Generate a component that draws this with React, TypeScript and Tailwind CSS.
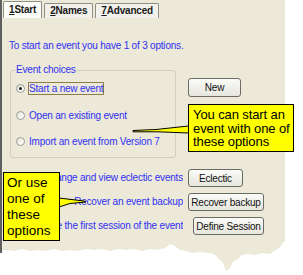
import React from 'react';

const BLUE = 'text-[#3030f4]';

function Tab({ digit, label, active }: { digit: string; label: string; active?: boolean }) {
  return (
    <div
      className={
        active
          ? 'h-[17px] px-[5px] flex items-center bg-[#fbfbf8] border border-[#8f8f88] border-b-0 rounded-t-[2px]'
          : 'h-[15px] px-[5px] flex items-center bg-[#f1f0ea] border border-[#8f8f88] border-b-0 rounded-t-[2px]'
      }
    >
      <span className="text-[10px] leading-[12px] font-bold tracking-[-0.2px] text-[#1a1a1a]">
        <span className="underline">{digit}</span>
        {label}
      </span>
    </div>
  );
}

function XpButton({ label, className = '' }: { label: string; className?: string }) {
  return (
    <div
      className={
        'h-[18px] flex items-center justify-center rounded-[3px] border border-[#6c6c66] bg-gradient-to-b from-[#fbfbf8] to-[#e6e5dd] text-[10px] tracking-[-0.2px] text-[#111] ' +
        className
      }
    >
      {label}
    </div>
  );
}

function Radio({ checked }: { checked?: boolean }) {
  return (
    <div className="w-[9px] h-[9px] rounded-full border border-[#9c9c94] bg-gradient-to-br from-[#e2e2da] to-white flex items-center justify-center shrink-0">
      {checked && <div className="w-[3px] h-[3px] rounded-full bg-[#1d1d1d]" />}
    </div>
  );
}

function ActionRow({ text, button, btnClass }: { text: string; button: string; btnClass: string }) {
  return (
    <div className="flex items-center">
      <div className={`w-[181px] text-right text-[10px] leading-[12px] tracking-[-0.2px] whitespace-nowrap overflow-hidden ${BLUE}`}>
        {text}
      </div>
      <XpButton label={button} className={btnClass} />
    </div>
  );
}

export default function App() {
  return (
    <div className="relative w-[303px] h-[275px] bg-white overflow-hidden font-['Liberation_Sans',Arial,sans-serif]">
      <div className="w-[285px]">
        {/* Dialog page */}
        <div className="h-[242px] bg-[#ECE9D8] border-l-2 border-[#5f5f5f]">
          {/* Tabs */}
          <div className="flex items-end gap-[2px] pl-[1px] pt-[1px] h-[18px]">
            <Tab digit="1" label="Start" active />
            <Tab digit="2" label="Names" />
            <Tab digit="7" label="Advanced" />
          </div>

          <p className={`mt-[22px] pl-[7px] text-[10px] leading-[12px] tracking-[-0.2px] ${BLUE}`}>
            To start an event you have 1 of 3 options.
          </p>

          {/* Event choices */}
          <div className="mt-[12px] flex items-start">
            <fieldset className="ml-[8px] w-[166px] h-[94px] border border-[#cfcfc0] rounded-[3px]">
              <legend className={`ml-[5px] text-[10px] leading-[12px] tracking-[-0.2px] ${BLUE}`}>Event choices</legend>
              <div className="flex flex-col">
                <div className="mt-[6px] ml-[5px] flex items-center gap-[3px] h-[13px]">
                  <Radio checked />
                  <span className={`border border-[#8d7d4c] text-[10px] leading-[11px] tracking-[-0.2px] ${BLUE}`}>
                    Start a new event
                  </span>
                </div>
                <div className="mt-[14px] ml-[5px] flex items-center gap-[3px] h-[13px]">
                  <Radio />
                  <span className={`border border-transparent text-[10px] leading-[11px] tracking-[-0.2px] ${BLUE}`}>
                    Open an existing event
                  </span>
                </div>
                <div className="mt-[13px] ml-[5px] flex items-center gap-[3px] h-[13px]">
                  <Radio />
                  <span className={`border border-transparent text-[10px] leading-[11px] tracking-[-0.2px] ${BLUE}`}>
                    Import an event from Version 7
                  </span>
                </div>
              </div>
            </fieldset>
            <XpButton label="New" className="ml-[12px] mt-[14px] w-[53px] h-[19px]" />
          </div>

          {/* Other actions */}
          <div className="mt-[11px] flex flex-col gap-[6px]">
            <ActionRow text="Change and view eclectic events" button="Eclectic" btnClass="ml-[5px] w-[55px]" />
            <ActionRow text="Recover an event backup" button="Recover backup" btnClass="ml-[5px] w-[76px]" />
            <ActionRow text="Define the first session of the event" button="Define Session" btnClass="ml-[10px] w-[71px]" />
          </div>
        </div>

        {/* torn paper edge */}
        <svg width="285" height="33" viewBox="0 0 285 33" className="block">
          <polygon
            fill="#ECE9D8"
            points="0,0 285,0 283,0 281,4 278,7 274,9 270,12 262,11 255,13 248,12 242,13 238,17 233,20 229,27 226,29 223,21 219,17 214,12 208,11 200,10 192,11 186,9 180,8 175,4 170,2 165,6 158,8 150,7 142,9 134,7 126,8 118,7 110,9 102,7 94,8 86,7 78,9 70,8 62,9 54,7 46,9 38,8 30,9 22,7 14,9 8,8 2,9 0,11"
          />
          <rect x="0" y="0" width="2" height="11" fill="#5f5f5f" />
        </svg>
      </div>

      {/* callout pointers */}
      <svg width="303" height="275" className="absolute left-0 top-0 pointer-events-none">
        <polygon
          points="133,130.5 156,129.5 188.5,126 188.5,133 158,131.8 133,131.8"
          fill="#ffff00"
          stroke="#000"
          strokeWidth="1"
        />
        <polygon points="59,198 84,201 86,202 70,203.5 59,207" fill="#ffff00" stroke="#000" strokeWidth="1" />
      </svg>

      {/* callout 1 */}
      <div className="absolute left-[188px] top-[104px] w-[106px] h-[48px] bg-[#ffff00] border border-black pl-[4px] pt-[3px] text-[13px] leading-[13.5px] tracking-[-0.1px] whitespace-nowrap text-black">
        <div>You can start an</div>
        <div>event with one of</div>
        <div>these options</div>
      </div>

      {/* callout 2 */}
      <div className="absolute left-[3px] top-[172px] w-[57px] h-[69px] bg-[#ffff00] border border-black pl-[3px] pt-[2px] text-[13.5px] leading-[16px] whitespace-nowrap text-black">
        <div>Or use</div>
        <div>one of</div>
        <div>these</div>
        <div>options</div>
      </div>
    </div>
  );
}
